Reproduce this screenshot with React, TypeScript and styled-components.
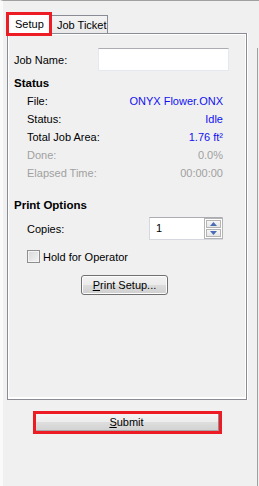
import styled, { createGlobalStyle } from "styled-components";

const GlobalStyle = createGlobalStyle`
  html, body {
    margin: 0;
    padding: 0;
    background: #f0f0f0;
  }
  body {
    font-family: "Liberation Sans", Arial, sans-serif;
    font-size: 11px;
    color: #000;
  }
`;

const Page = styled.div`
  display: flex;
  width: 259px;
  height: 486px;
  box-sizing: border-box;
  background: #f0f0f0;
  border-top: 1px solid #a0a0a0;
  border-left: 3px solid #fafafa;
`;

const MainColumn = styled.div`
  display: flex;
  flex-direction: column;
  width: 254px;
`;

const RightRail = styled.div`
  width: 1px;
  margin-top: 47px;
  background: #a0a0a0;
`;

const TabStrip = styled.div`
  display: flex;
  align-items: flex-end;
  height: 32px;
  margin-left: 4px;
`;

const Tab = styled.div<{ active?: boolean }>`
  position: relative;
  box-sizing: border-box;
  display: flex;
  align-items: center;
  white-space: nowrap;
  ${(p) =>
    p.active
      ? `
    z-index: 2;
    width: 46px;
    height: 24px;
    margin-left: -1px;
    margin-bottom: -3px;
    padding: 0 0 0 6px;
    background: #fff;
    border: 3px solid #ed1c24;
  `
      : `
    z-index: 1;
    width: 57px;
    height: 18px;
    margin-left: -1px;
    padding: 1px 0 0 5px;
    background: linear-gradient(#f3f3f3, #e9e9e9);
    border: 1px solid #898c95;
    border-bottom: none;
  `}
`;

const Panel = styled.div`
  box-sizing: border-box;
  display: flex;
  flex-direction: column;
  width: 240px;
  height: 367px;
  margin-left: 4px;
  padding: 14px 17px 0 6px;
  background: #f0f0f0;
  border: 1px solid #898c95;
  box-shadow: inset 1px 1px 0 #fff, inset -1px -2px 0 #fff, 1px 0 0 #fff;
`;

const JobRow = styled.div`
  display: flex;
  align-items: center;
  height: 23px;
`;

const JobLabel = styled.span`
  width: 84px;
`;

const TextBox = styled.div`
  box-sizing: border-box;
  width: 131px;
  height: 23px;
  background: #fff;
  border: 1px solid #e3e9ef;
  border-top-color: #abadb3;
`;

const Heading = styled.div<{ gap: number }>`
  font-weight: bold;
  font-size: 11.5px;
  line-height: 18px;
  margin-top: ${(p) => p.gap}px;
`;

const InfoRow = styled.div<{ disabled?: boolean }>`
  display: flex;
  justify-content: space-between;
  align-items: center;
  height: 18px;
  padding: 0 6px 0 13px;
  color: ${(p) => (p.disabled ? "#a0a0a0" : "#000")};
`;

const Value = styled.span<{ disabled?: boolean }>`
  color: ${(p) => (p.disabled ? "#a0a0a0" : "#1010f0")};
`;

const CopiesRow = styled.div`
  display: flex;
  justify-content: space-between;
  align-items: center;
  height: 23px;
  margin-top: 3px;
  padding: 0 6px 0 13px;
`;

const SpinBox = styled.div`
  box-sizing: border-box;
  display: flex;
  width: 74px;
  height: 23px;
  background: #fff;
  border: 1px solid #d5d8de;
  border-top-color: #abadb3;
`;

const SpinText = styled.span`
  flex: 1;
  padding-left: 6px;
  line-height: 21px;
`;

const SpinButtons = styled.div`
  display: flex;
  flex-direction: column;
  gap: 1px;
  padding: 1px;
  margin: 0 -1px 0 0;
  border: 1px solid #b4b4b4;
  background: #fff;
`;

const SpinButton = styled.div`
  box-sizing: border-box;
  display: flex;
  align-items: center;
  justify-content: center;
  width: 15px;
  height: 9px;
  border: 1px solid #b4b4b4;
  background: linear-gradient(#f6f6f6, #e6e6e6);
`;

const CheckRow = styled.label`
  display: flex;
  align-items: center;
  gap: 3px;
  height: 15px;
  margin-top: 9px;
  padding-left: 13px;
`;

const CheckBox = styled.span`
  box-sizing: border-box;
  width: 13px;
  height: 13px;
  border: 1px solid #8e8f8f;
  background: linear-gradient(135deg, #d8d8d8, #f4f4f4);
  box-shadow: inset 0 0 0 1px #f4f4f4;
`;

const ButtonRow = styled.div`
  display: flex;
  justify-content: center;
  margin-top: 11px;
  padding-left: 6px;
`;

const PushButton = styled.button`
  box-sizing: border-box;
  width: 87px;
  height: 20px;
  padding: 0;
  font: inherit;
  color: #000;
  border: 1px solid #707070;
  border-radius: 3px;
  background: linear-gradient(#f2f2f2 0%, #ebebeb 50%, #dddddd 50%, #cfcfcf 100%);
  box-shadow: inset 0 0 0 1px #fcfcfc;
`;

const SubmitArea = styled.div`
  display: flex;
  justify-content: center;
  width: 240px;
  margin: 11px 0 0 4px;
`;

const Highlight = styled.div`
  box-sizing: border-box;
  width: 189px;
  height: 23px;
  border: 3px solid #ed1c24;
  display: flex;
`;

const SubmitButton = styled.button`
  flex: 1;
  padding: 0;
  font: inherit;
  color: #000;
  border: none;
  border-right: 1px solid #8c8c8c;
  border-bottom: 1px solid #a8a8a8;
  background: linear-gradient(#f4f4f4 0%, #ececec 50%, #dedede 50%, #d2d2d2 100%);
`;

const Arrow = ({ up }: { up?: boolean }) => (
  <svg width="7" height="4" viewBox="0 0 7 4">
    <path d={up ? "M0 4 L3.5 0 L7 4 Z" : "M0 0 L3.5 4 L7 0 Z"} fill="#4a6cb5" />
  </svg>
);

const statusRows = [
  { label: "File:", value: "ONYX Flower.ONX" },
  { label: "Status:", value: "Idle" },
  { label: "Total Job Area:", value: "1.76 ft²" },
  { label: "Done:", value: "0.0%", disabled: true },
  { label: "Elapsed Time:", value: "00:00:00", disabled: true },
];

export default function App() {
  return (
    <>
      <GlobalStyle />
      <Page>
        <MainColumn>
          <TabStrip>
            <Tab active>Setup</Tab>
            <Tab>Job Ticket</Tab>
          </TabStrip>
          <Panel>
            <JobRow>
              <JobLabel>Job Name:</JobLabel>
              <TextBox />
            </JobRow>

            <Heading gap={3}>Status</Heading>
            {statusRows.map((r) => (
              <InfoRow key={r.label} disabled={r.disabled}>
                <span>{r.label}</span>
                <Value disabled={r.disabled}>{r.value}</Value>
              </InfoRow>
            ))}

            <Heading gap={14}>Print Options</Heading>
            <CopiesRow>
              <span>Copies:</span>
              <SpinBox>
                <SpinText>1</SpinText>
                <SpinButtons>
                  <SpinButton>
                    <Arrow up />
                  </SpinButton>
                  <SpinButton>
                    <Arrow />
                  </SpinButton>
                </SpinButtons>
              </SpinBox>
            </CopiesRow>

            <CheckRow>
              <CheckBox />
              <span>Hold for Operator</span>
            </CheckRow>

            <ButtonRow>
              <PushButton>
                <u>P</u>rint Setup...
              </PushButton>
            </ButtonRow>
          </Panel>

          <SubmitArea>
            <Highlight>
              <SubmitButton>
                <u>S</u>ubmit
              </SubmitButton>
            </Highlight>
          </SubmitArea>
        </MainColumn>
        <RightRail />
      </Page>
    </>
  );
}
